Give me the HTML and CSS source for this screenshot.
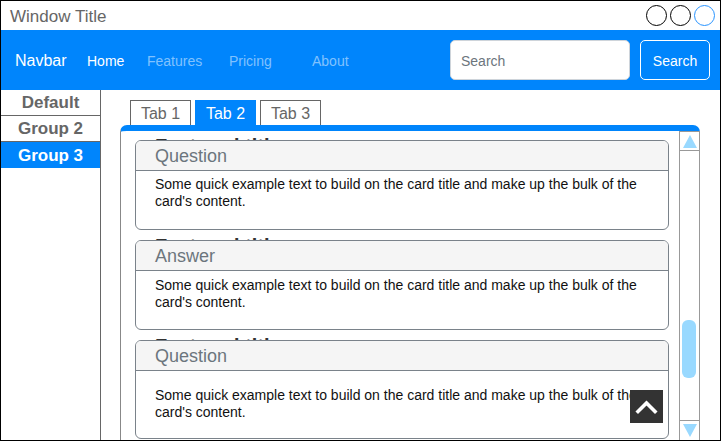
FILE: index.html
```html
<!DOCTYPE html>
<html>
<head>
<meta charset="utf-8">
<link rel="stylesheet" href="styles.css">
</head>
<body>
<div class="window">
  <div class="titlebar">
    <div class="title">Window Title</div>
    <div class="controls">
      <span class="dot"></span>
      <span class="dot"></span>
      <span class="dot dot-blue"></span>
    </div>
  </div>
  <div class="navbar">
    <div class="brand">Navbar</div>
    <div class="nav-link nav-home">Home</div>
    <div class="nav-link nav-muted nav-features">Features</div>
    <div class="nav-link nav-muted nav-pricing">Pricing</div>
    <div class="nav-link nav-muted">About</div>
    <div class="spacer"></div>
    <div class="search-input">Search</div>
    <div class="search-btn">Search</div>
  </div>
  <div class="main">
    <div class="sidebar">
      <div class="side-item">Default</div>
      <div class="side-item">Group 2</div>
      <div class="side-item side-active">Group 3</div>
    </div>
    <div class="content">
      <div class="tabs">
        <div class="tab">Tab 1</div>
        <div class="tab tab-active">Tab 2</div>
        <div class="tab">Tab 3</div>
      </div>
      <div class="panel">
        <div class="cards">
          <div class="item">
            <div class="ghost">Featured title</div>
            <div class="card">
              <div class="card-header">Question</div>
              <div class="card-body body-1">Some quick example text to build on the card title and make up the bulk of the card's content.</div>
            </div>
          </div>
          <div class="item">
            <div class="ghost">Featured title</div>
            <div class="card">
              <div class="card-header">Answer</div>
              <div class="card-body body-2">Some quick example text to build on the card title and make up the bulk of the card's content.</div>
            </div>
          </div>
          <div class="item">
            <div class="ghost">Featured title</div>
            <div class="card">
              <div class="card-header">Question</div>
              <div class="card-body body-3">Some quick example text to build on the card title and make up the bulk of the card's content.</div>
            </div>
          </div>
        </div>
        <div class="scrollbar">
          <div class="sb-btn sb-up"><svg width="14" height="13" viewBox="0 0 14 13"><polygon points="7,0 14,13 0,13" fill="#99d9ff"/></svg></div>
          <div class="sb-track"><div class="sb-thumb"></div></div>
          <div class="sb-btn sb-down"><svg width="14" height="13" viewBox="0 0 14 13"><polygon points="0,0 14,0 7,13" fill="#99d9ff"/></svg></div>
        </div>
        <div class="totop"><svg width="33" height="33" viewBox="0 0 33 33"><polyline points="8,21.5 16.5,13 25,21.5" fill="none" stroke="#fff" stroke-width="3.6" stroke-linecap="square"/></svg></div>
      </div>
    </div>
  </div>
</div>
</body>
</html>
```
FILE: styles.css
```css
* { box-sizing: border-box; }
html, body { margin: 0; padding: 0; background: #fff; }
body { font-family: "Liberation Sans", Arial, sans-serif; }

.window {
  width: 721px;
  height: 441px;
  border: 1px solid #000;
  overflow: hidden;
  display: flex;
  flex-direction: column;
}

.titlebar {
  height: 29px;
  flex: none;
  display: flex;
  align-items: center;
  padding: 0 5px 0 9px;
}
.title { flex: 1; font-size: 17px; color: #666; padding-top: 3px; }
.controls { display: flex; gap: 3px; }
.dot {
  width: 21px; height: 21px;
  border: 1px solid #000;
  border-radius: 50%;
  display: block;
}
.dot-blue { border-color: #2994ff; }

.navbar {
  height: 60px;
  flex: none;
  background: #0085FC;
  display: flex;
  align-items: center;
  padding: 0 10px 0 14px;
  color: #fff;
}
.brand { font-size: 16px; width: 72px; padding-top: 2px; }
.nav-link { font-size: 14px; padding-top: 2px; }
.nav-home { width: 60px; }
.nav-features { width: 82px; }
.nav-pricing { width: 83px; }
.nav-muted { color: #80c2fe; }
.spacer { flex: 1; }
.search-input {
  width: 180px; height: 40px;
  background: #fff;
  border: 1px solid #ced4da;
  border-radius: 5px;
  color: #6c757d;
  font-size: 14px;
  display: flex; align-items: center;
  padding: 2px 0 0 10px;
  margin-right: 10px;
}
.search-btn {
  width: 70px; height: 40px;
  border: 1px solid #fff;
  border-radius: 5px;
  font-size: 14px;
  display: flex; align-items: center; justify-content: center;
  padding-top: 2px;
}

.main { flex: 1; display: flex; min-height: 0; }

.sidebar {
  width: 100px;
  flex: none;
  border-right: 1px solid #666;
}
.side-item {
  height: 26px;
  border-bottom: 1px solid #666;
  font-size: 17px;
  font-weight: bold;
  color: #666;
  display: flex; align-items: center; justify-content: center;
  padding-top: 1px;
}
.side-active {
  background: #0085FC;
  color: #fff;
  border-bottom: none;
}

.content {
  flex: 1;
  display: flex;
  flex-direction: column;
  padding: 10px 0 0 19px;
  min-height: 0;
}
.tabs { display: flex; gap: 4px; margin-left: 10px; height: 25px; flex: none; }
.tab {
  width: 61px; height: 25px;
  border: 1px solid #666;
  border-bottom: none;
  font-size: 16px;
  color: #666;
  display: flex; align-items: center; justify-content: center;
  padding-top: 1px;
}
.tab-active { background: #0085FC; border-color: #0085FC; color: #fff; }

.panel {
  position: relative;
  width: 580px;
  flex: 1;
  display: flex;
  border-top: 6px solid #0085FC;
  border-left: 1px solid #888;
  border-radius: 7px 7px 0 0;
  min-height: 0;
}
.cards {
  flex: 1;
  display: flex;
  flex-direction: column;
  gap: 6px;
  padding: 5px 10px 0 14px;
}
.ghost {
  height: 4px;
  overflow: hidden;
  font-size: 20px;
  line-height: 20px;
  font-weight: bold;
  color: #333;
  padding-left: 20px;
  white-space: nowrap;
}
.card {
  background: #fff;
  border: 1px solid #7a828a;
  border-radius: 6px;
  overflow: hidden;
}
.card-header {
  height: 30px;
  background: #f5f5f5;
  border-bottom: 1px solid #7a828a;
  font-size: 18px;
  color: #6c757d;
  padding: 2px 0 0 19px;
  display: flex; align-items: center;
}
.card-body {
  font-size: 14px;
  line-height: 17px;
  color: #111;
  padding: 5px 14px 0 19px;
}
.body-1 { height: 58px; }
.body-2 { height: 58px; padding-top: 6px; }
.body-3 { height: 67px; padding-top: 16px; }

.scrollbar {
  width: 21px;
  flex: none;
  border: 1px solid #999;
  border-bottom: none;
  display: flex;
  flex-direction: column;
}
.sb-btn {
  height: 19px;
  flex: none;
  display: flex; align-items: center; justify-content: center;
}
.sb-up { border-bottom: 1px solid #999; }
.sb-down { border-top: 1px solid #999; height: 20px; }
.sb-track { flex: 1; padding: 169px 0 0 2px; }
.sb-thumb {
  width: 14px; height: 58px;
  background: #99d9ff;
  border-radius: 6px;
}

.totop {
  position: absolute;
  left: 509px;
  top: 259px;
  width: 33px; height: 33px;
  background: #333;
}
.totop svg { display: block; }
```
